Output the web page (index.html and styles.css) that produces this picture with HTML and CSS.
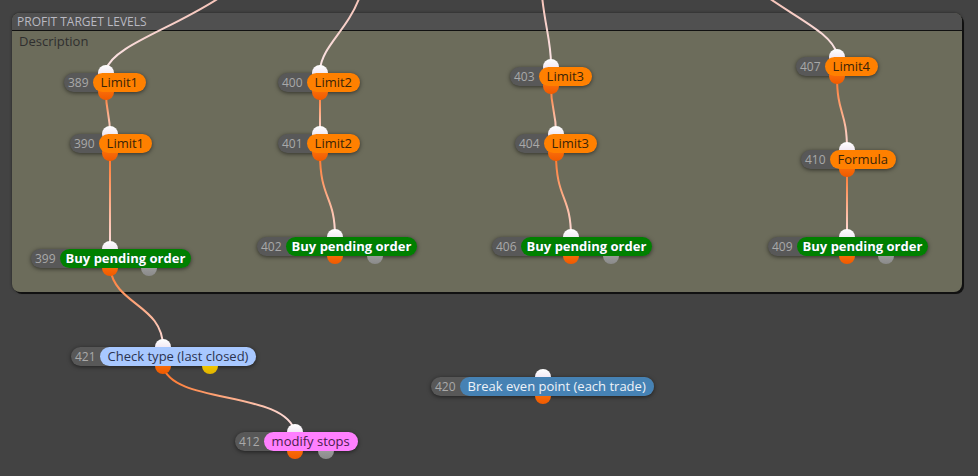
FILE: index.html
```html
<!DOCTYPE html>
<html lang="en">
<head>
    <meta charset="UTF-8">
    <title>Profit target levels</title>
    <link rel="stylesheet" href="styles.css">
</head>
<body>
    <div class="canvas">
        <!-- Group box -->
        <div class="group">
            <div class="group-title">PROFIT TARGET LEVELS</div>
            <div class="group-desc">Description</div>
        </div>

        <!-- Wires -->
        <svg class="wires" width="978" height="476" viewBox="0 0 978 476">
            <defs>
                <linearGradient id="wIn" x1="0" y1="0" x2="0" y2="1">
                    <stop offset="0" stop-color="#f6c2b6"/>
                    <stop offset="1" stop-color="#fbe6e8"/>
                </linearGradient>
                <linearGradient id="w1" gradientUnits="userSpaceOnUse" x1="0" y1="92" x2="0" y2="134">
                    <stop offset="0" stop-color="#ff7426"/><stop offset="1" stop-color="#fde2e4"/>
                </linearGradient>
                <linearGradient id="w2" gradientUnits="userSpaceOnUse" x1="0" y1="153" x2="0" y2="249">
                    <stop offset="0" stop-color="#ff7426"/><stop offset="1" stop-color="#fde2e4"/>
                </linearGradient>
                <linearGradient id="w3" gradientUnits="userSpaceOnUse" x1="0" y1="153" x2="0" y2="237">
                    <stop offset="0" stop-color="#ff7426"/><stop offset="1" stop-color="#fde2e4"/>
                </linearGradient>
                <linearGradient id="w4" gradientUnits="userSpaceOnUse" x1="0" y1="86" x2="0" y2="134">
                    <stop offset="0" stop-color="#ff7426"/><stop offset="1" stop-color="#fde2e4"/>
                </linearGradient>
                <linearGradient id="w5" gradientUnits="userSpaceOnUse" x1="0" y1="76" x2="0" y2="150">
                    <stop offset="0" stop-color="#ff7426"/><stop offset="1" stop-color="#fde2e4"/>
                </linearGradient>
                <linearGradient id="w6" gradientUnits="userSpaceOnUse" x1="0" y1="169" x2="0" y2="237">
                    <stop offset="0" stop-color="#ff7426"/><stop offset="1" stop-color="#fde2e4"/>
                </linearGradient>
                <linearGradient id="w7" gradientUnits="userSpaceOnUse" x1="0" y1="268" x2="0" y2="347">
                    <stop offset="0" stop-color="#ff7426"/><stop offset="1" stop-color="#fde2e4"/>
                </linearGradient>
                <linearGradient id="w8" gradientUnits="userSpaceOnUse" x1="163" y1="366" x2="295" y2="432">
                    <stop offset="0" stop-color="#ff7426"/><stop offset="1" stop-color="#fde2e4"/>
                </linearGradient>
            </defs>
            <!-- from nodes above the view -->
            <path class="wire" stroke="url(#wIn)" d="M 222 -4 C 175 28, 112 46, 106 70"/>
            <path class="wire" stroke="url(#wIn)" d="M 360 -4 C 348 30, 322 46, 320 70"/>
            <path class="wire" stroke="url(#wIn)" d="M 542 -4 C 545 26, 551 42, 551 64"/>
            <path class="wire" stroke="url(#wIn)" d="M 766 -4 C 800 20, 832 34, 837 54"/>
            <!-- inside the group -->
            <path class="wire" stroke="url(#w1)" d="M 106 92 C 106 113, 110 113, 110 134"/>
            <path class="wire" stroke="url(#w2)" d="M 110 153 C 110 200, 110 200, 110 249"/>
            <path class="wire" stroke="url(#w1)" d="M 320 92 C 320 113, 320 113, 320 134"/>
            <path class="wire" stroke="url(#w3)" d="M 320 153 C 320 200, 335 195, 335 237"/>
            <path class="wire" stroke="url(#w4)" d="M 551 86 C 551 110, 556 110, 556 134"/>
            <path class="wire" stroke="url(#w3)" d="M 556 153 C 556 200, 571 195, 571 237"/>
            <path class="wire" stroke="url(#w5)" d="M 837 76 C 837 115, 847 110, 847 150"/>
            <path class="wire" stroke="url(#w6)" d="M 847 169 C 847 200, 847 205, 847 237"/>
            <!-- outside -->
            <path class="wire" stroke="url(#w7)" d="M 110 268 C 115 305, 163 305, 163 347"/>
            <path class="wire" stroke="url(#w8)" d="M 163 366 C 172 405, 285 390, 295 432"/>
        </svg>

        <!-- Nodes -->
        <div class="node" style="left:64px;top:73px">
            <span class="port in" style="left:34px"></span>
            <span class="port out" style="left:34px"></span>
            <span class="id">389</span><span class="label orange">Limit1</span>
        </div>
        <div class="node" style="left:70px;top:134px">
            <span class="port in" style="left:32px"></span>
            <span class="port out" style="left:32px"></span>
            <span class="id">390</span><span class="label orange">Limit1</span>
        </div>
        <div class="node" style="left:31px;top:249px">
            <span class="port in" style="left:71px"></span>
            <span class="port out" style="left:71px"></span>
            <span class="port out grey" style="left:110px"></span>
            <span class="id">399</span><span class="label green">Buy pending order</span>
        </div>

        <div class="node" style="left:278px;top:73px">
            <span class="port in" style="left:34px"></span>
            <span class="port out" style="left:34px"></span>
            <span class="id">400</span><span class="label orange">Limit2</span>
        </div>
        <div class="node" style="left:278px;top:134px">
            <span class="port in" style="left:34px"></span>
            <span class="port out" style="left:34px"></span>
            <span class="id">401</span><span class="label orange">Limit2</span>
        </div>
        <div class="node" style="left:257px;top:237px">
            <span class="port in" style="left:70px"></span>
            <span class="port out" style="left:70px"></span>
            <span class="port out grey" style="left:110px"></span>
            <span class="id">402</span><span class="label green">Buy pending order</span>
        </div>

        <div class="node" style="left:510px;top:67px">
            <span class="port in" style="left:33px"></span>
            <span class="port out" style="left:33px"></span>
            <span class="id">403</span><span class="label orange">Limit3</span>
        </div>
        <div class="node" style="left:515px;top:134px">
            <span class="port in" style="left:33px"></span>
            <span class="port out" style="left:33px"></span>
            <span class="id">404</span><span class="label orange">Limit3</span>
        </div>
        <div class="node" style="left:492px;top:237px">
            <span class="port in" style="left:71px"></span>
            <span class="port out" style="left:71px"></span>
            <span class="port out grey" style="left:111px"></span>
            <span class="id">406</span><span class="label green">Buy pending order</span>
        </div>

        <div class="node" style="left:796px;top:57px">
            <span class="port in" style="left:33px"></span>
            <span class="port out" style="left:33px"></span>
            <span class="id">407</span><span class="label orange">Limit4</span>
        </div>
        <div class="node" style="left:801px;top:150px">
            <span class="port in" style="left:38px"></span>
            <span class="port out" style="left:38px"></span>
            <span class="id">410</span><span class="label orange">Formula</span>
        </div>
        <div class="node" style="left:768px;top:237px">
            <span class="port in" style="left:71px"></span>
            <span class="port out" style="left:71px"></span>
            <span class="port out grey" style="left:110px"></span>
            <span class="id">409</span><span class="label green">Buy pending order</span>
        </div>

        <div class="node" style="left:71px;top:347px">
            <span class="port in" style="left:84px"></span>
            <span class="port out" style="left:84px"></span>
            <span class="port out yellow" style="left:131px"></span>
            <span class="id">421</span><span class="label sky">Check type (last closed)</span>
        </div>
        <div class="node" style="left:431px;top:377px">
            <span class="port in" style="left:104px"></span>
            <span class="port out" style="left:104px"></span>
            <span class="id">420</span><span class="label steel">Break even point (each trade)</span>
        </div>
        <div class="node" style="left:235px;top:432px">
            <span class="port in" style="left:52px"></span>
            <span class="port out" style="left:52px"></span>
            <span class="port out grey" style="left:83px"></span>
            <span class="id">412</span><span class="label pink">modify stops</span>
        </div>
    </div>
</body>
</html>
```

FILE: styles.css
```css
body {
    margin: 0;
    background-color: #434343;
    font-family: "Open Sans", "DejaVu Sans", sans-serif;
}

.canvas {
    position: relative;
    width: 978px;
    height: 476px;
    overflow: hidden;
}

/* Group box */
.group {
    position: absolute;
    left: 12px;
    top: 13px;
    width: 950px;
    height: 279px;
    background-color: #6c6c5b;
    border-radius: 8px;
    box-shadow: 2px 2px 0 #111, 0 0 3px rgba(0, 0, 0, 0.5);
    overflow: hidden;
}

.group-title {
    height: 17px;
    line-height: 17px;
    background-color: #505050;
    border-bottom: 1px solid #111;
    color: #b9b9c2;
    font-size: 12px;
    padding-left: 5px;
}

.group-desc {
    color: #2f2f2f;
    font-size: 13px;
    line-height: 20px;
    padding-left: 7px;
}

/* Wires */
.wires {
    position: absolute;
    left: 0;
    top: 0;
}

.wire {
    fill: none;
    stroke-width: 2;
}

/* Nodes */
.node {
    position: absolute;
    display: flex;
    height: 19px;
    line-height: 19px;
    background-color: #585858;
    border-radius: 10px;
    box-shadow: 0 1px 4px rgba(0, 0, 0, 0.55);
    white-space: nowrap;
}

.id {
    position: relative;
    z-index: 1;
    color: #a9a9a9;
    font-size: 12px;
    padding: 0 4px;
}

.label {
    position: relative;
    z-index: 1;
    font-size: 13px;
    padding: 0 8px;
    border-radius: 10px;
}

.orange {
    background-color: #ff8000;
    color: #3a2408;
}

.green {
    background-color: #008000;
    color: #fff;
    font-weight: bold;
    padding: 0 6px;
    text-shadow: 0 0 1px #063, 0 0 1px #063;
}

.sky {
    background-color: #a8c8ff;
    color: #2b3350;
}

.steel {
    background-color: #4682b4;
    color: #eef2f8;
}

.pink {
    background-color: #ff80ff;
    color: #4a1c4a;
}

/* Ports */
.port {
    position: absolute;
    z-index: 0;
    width: 16px;
    height: 16px;
    border-radius: 50%;
}

.port.in {
    top: -8px;
    background: linear-gradient(#ffffff, #e6d6ea);
}

.port.out {
    top: 11px;
    background: linear-gradient(#ff7a10, #f05a00);
}

.port.grey {
    background: linear-gradient(#a8a8a8, #8a8a8a);
}

.port.yellow {
    background: linear-gradient(#ffd400, #e0b400);
}
```
